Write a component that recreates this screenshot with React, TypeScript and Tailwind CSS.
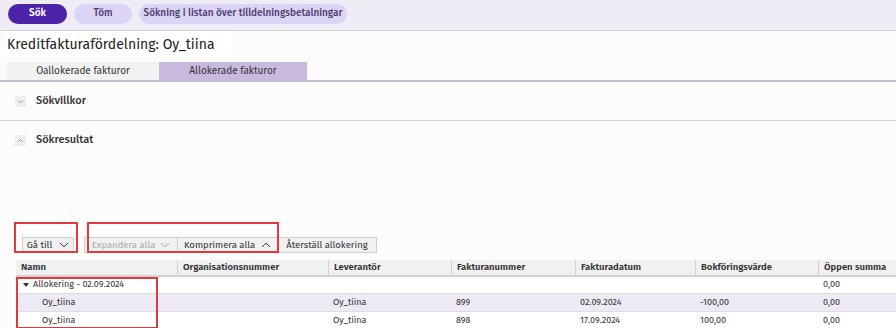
import React from "react";

const cols = [
  { label: "Namn", w: "w-[161px]" },
  { label: "Organisationsnummer", w: "w-[151px]" },
  { label: "Leverantör", w: "w-[123px]" },
  { label: "Fakturanummer", w: "w-[124px]" },
  { label: "Fakturadatum", w: "w-[120px]" },
  { label: "Bokföringsvärde", w: "w-[123px]" },
  { label: "Öppen summa", w: "flex-1" },
];

const rows = [
  { name: "Oy_tiina", lev: "Oy_tiina", nr: "899", date: "02.09.2024", value: "-100,00", open: "0,00", shade: true },
  { name: "Oy_tiina", lev: "Oy_tiina", nr: "898", date: "17.09.2024", value: "100,00", open: "0,00", shade: false },
];

function Chevron({ up }: { up?: boolean }) {
  return (
    <svg width="10" height="6" viewBox="0 0 10 6" className="shrink-0">
      <path d={up ? "M1 5 L5 1.2 L9 5" : "M1 1 L5 4.8 L9 1"} fill="none" stroke="currentColor" strokeWidth="1" />
    </svg>
  );
}

function SectionToggle({ label, up }: { label: string; up?: boolean }) {
  return (
    <div className="flex items-center h-[37px] pl-[15px] gap-[10px]">
      <div className="w-[11px] h-[11px] bg-[#eeeeee] text-[#999] flex items-center justify-center">
        <svg width="7" height="5" viewBox="0 0 7 5">
          <path d={up ? "M1 4 L3.5 1.5 L6 4" : "M1 1.5 L3.5 4 L6 1.5"} fill="none" stroke="currentColor" strokeWidth="1" />
        </svg>
      </div>
      <span className="text-[11px] font-medium text-[#333]">{label}</span>
    </div>
  );
}

export default function App() {
  return (
    <div className="w-[896px] h-[328px] overflow-hidden bg-[#fcfcfc] font-['Fira_Sans','Lato',sans-serif] text-[#333]">
      <div className="h-[31px] bg-[#efecf6] border-b border-[#d6d2de] flex items-center gap-[7px] pl-[8px] pb-[3px] whitespace-nowrap">
        <button className="h-[20px] w-[59px] rounded-full bg-[#4b22a8] text-white text-[10px] font-semibold">Sök</button>
        <button className="h-[20px] w-[58px] rounded-full bg-[#dcd4f4] text-[#4a3d70] text-[10px] font-medium">Töm</button>
        <button className="h-[20px] w-[208px] rounded-full bg-[#dcd4f4] text-[#4a3d70] text-[10px] font-medium">
          Sökning i listan över tilldelningsbetalningar
        </button>
      </div>

      <div className="pl-[7px]">
        <div className="w-[225px] h-[26px] bg-white flex items-center">
          <span className="text-[14px] text-[#222]">Kreditfakturafördelning: Oy_tiina</span>
        </div>
      </div>

      <div className="mt-[5px] border-b-2 border-[#c4bdd3] flex pl-[7px]">
        <div className="w-[152px] h-[18px] bg-[#f2f2f2] flex items-center justify-center text-[10px] text-[#333]">
          Oallokerade fakturor
        </div>
        <div className="w-[148px] h-[18px] bg-[#c9b9df] flex items-center justify-center text-[10px] text-[#333]">
          Allokerade fakturor
        </div>
      </div>

      <div className="border-b border-[#d4d4d4] pt-[1px]">
        <SectionToggle label="Sökvillkor" />
      </div>
      <div className="pt-[1px]">
        <SectionToggle label="Sökresultat" up />
      </div>

      <div className="h-[78px]" />

      <div className="relative pl-[22px] flex items-center h-[16px] text-[9.5px] whitespace-nowrap">
        <div className="flex items-center border border-[#cfcfcf] bg-[#f1f1f1] h-[16px]">
          <div className="w-[50px] h-full flex items-center justify-center gap-[7px] text-[#333]">
            Gå till <Chevron />
          </div>
        </div>
        <div className="ml-[10px] flex items-center border border-[#cfcfcf] bg-[#f1f1f1] h-[16px]">
          <div className="w-[93px] h-full flex items-center justify-center gap-[5px] text-[#aaa] border-r border-[#cfcfcf]">
            Expandera alla <Chevron />
          </div>
          <div className="w-[100px] h-full flex items-center justify-center gap-[6px] text-[#333] border-r border-[#cfcfcf]">
            Komprimera alla <Chevron up />
          </div>
          <div className="w-[98px] h-full flex items-center justify-center text-[#333]">Återställ allokering</div>
        </div>

        <div className="absolute left-[14px] top-[-15px] w-[64px] h-[31px] border-2 border-[#e0393e]" />
        <div className="absolute left-[87px] top-[-15px] w-[192px] h-[31px] border-2 border-[#e0393e]" />
      </div>

      <div className="relative ml-[16px] mt-[7px] text-[9px] whitespace-nowrap">
        <div className="flex h-[17px] bg-[#f1f1f1] border-b-2 border-[#d2d2d2] font-semibold text-[9.5px] text-[#333]">
          {cols.map((c, i) => (
            <div key={c.label} className={`${c.w} flex items-center pl-[5px] ${i > 0 ? "border-l border-[#d0d0d0]" : ""}`}>
              {c.label}
            </div>
          ))}
        </div>

        <div className="flex h-[17px] items-center bg-white border-b border-[#dedede]">
          <div className="w-[161px] flex items-center gap-[4px] pl-[7px]">
            <svg width="6" height="4" viewBox="0 0 6 4">
              <path d="M0 0 L6 0 L3 4 Z" fill="#333" />
            </svg>
            Allokering - 02.09.2024
          </div>
          <div className="w-[151px]" />
          <div className="w-[123px]" />
          <div className="w-[124px]" />
          <div className="w-[120px]" />
          <div className="w-[123px]" />
          <div className="flex-1 pl-[5px]">0,00</div>
        </div>

        {rows.map((r, i) => (
          <div
            key={i}
            className={`flex h-[18px] items-center border-b border-[#dedede] ${r.shade ? "bg-[#eeeaf5]" : "bg-white"}`}
          >
            <div className="w-[161px] pl-[26px]">{r.name}</div>
            <div className="w-[151px]" />
            <div className="w-[123px] pl-[5px]">{r.lev}</div>
            <div className="w-[124px] pl-[5px]">{r.nr}</div>
            <div className="w-[120px] pl-[5px]">{r.date}</div>
            <div className="w-[123px] pl-[5px]">{r.value}</div>
            <div className="flex-1 pl-[5px]">{r.open}</div>
          </div>
        ))}

        <div className="absolute left-[0px] top-[17px] w-[142px] h-[52px] border-2 border-[#e0393e]" />
      </div>
    </div>
  );
}
